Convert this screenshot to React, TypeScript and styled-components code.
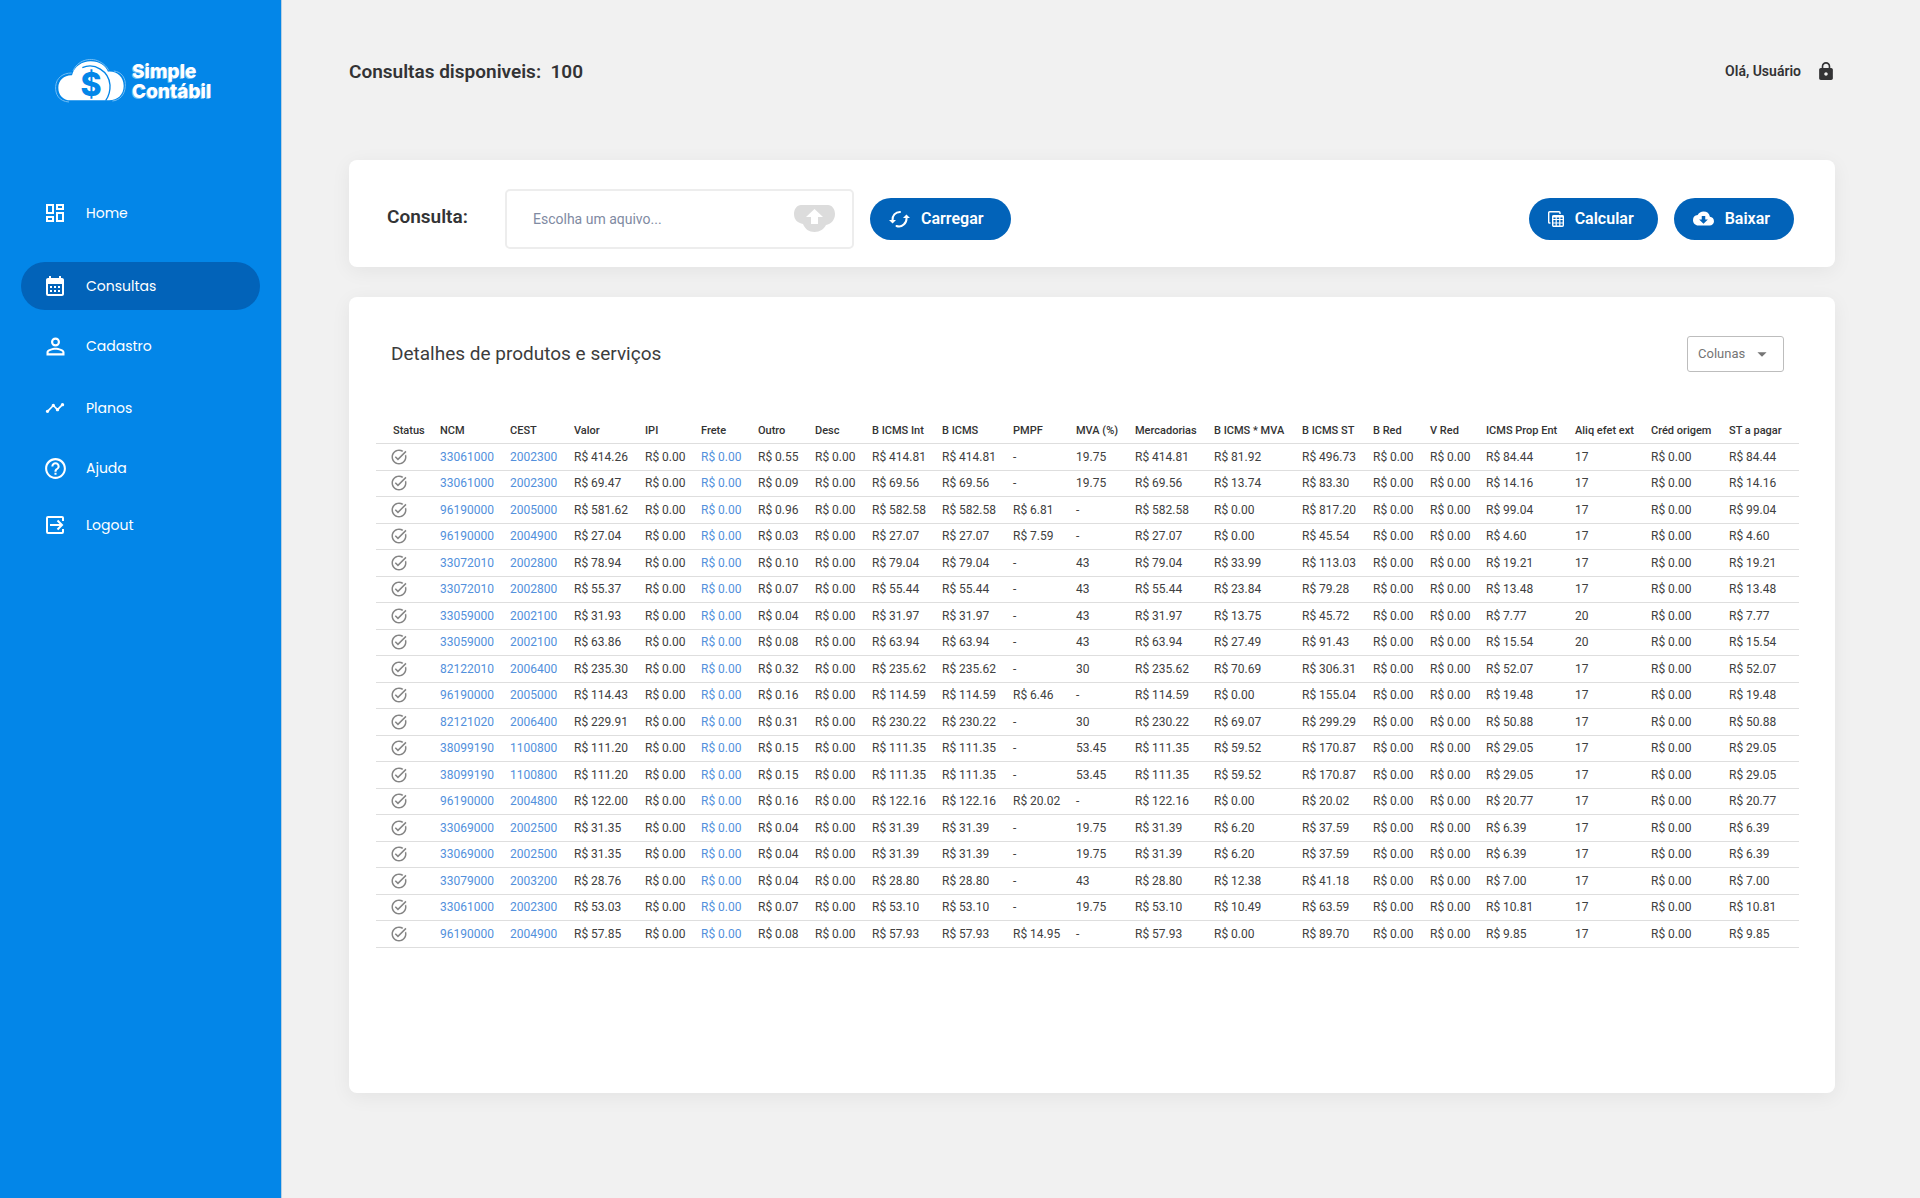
import React from "react";
import styled, { createGlobalStyle } from "styled-components";
import {
  MdOutlineDashboard,
  MdCalendarMonth,
  MdPersonOutline,
  MdTimeline,
  MdHelpOutline,
  MdCloudDownload,
  MdOutlineTaskAlt,
  MdArrowDropDown,
} from "react-icons/md";

const GlobalStyle = createGlobalStyle`
  *, *::before, *::after { box-sizing: border-box; }
  body {
    margin: 0;
    background: #f1f1f1;
    color: #333335;
    font-family: Roboto, "Liberation Sans", sans-serif;
  }
  button, input, select { font-family: inherit; }
`;

const Page = styled.div`
  display: flex;
  min-height: 100vh;
`;

const Sidebar = styled.aside`
  flex: none;
  width: 282px;
  padding: 57px 21px;
  background: #0386e8;
  border-right: 1px solid #b9cfe0;
`;

const Logo = styled.a`
  display: flex;
  align-items: flex-start;
  gap: 4px;
  height: 132px;
  padding-left: 32px;
  color: #fff;
  text-decoration: none;
`;

const LogoName = styled.span`
  display: flex;
  flex-direction: column;
  padding-top: 5px;
  font: 800 19px/20px Inter, "Open Sans", sans-serif;
  text-shadow: -1px 1px 0 #6fbcf5;
`;

const Nav = styled.nav`
  display: flex;
  flex-direction: column;
`;

const NavLink = styled.a<{ $active?: boolean; $after: number }>`
  display: flex;
  align-items: center;
  gap: 17px;
  height: 48px;
  margin-bottom: ${(p) => p.$after}px;
  padding-left: 20px;
  border-radius: 24px;
  background: ${(p) => (p.$active ? "#0263b9" : "transparent")};
  color: #fff;
  font: 400 14px/24px Poppins, Inter, "Open Sans", sans-serif;
  text-decoration: none;
`;

const NavIcon = styled.span`
  display: flex;
  justify-content: center;
  width: 28px;
`;

const Main = styled.main`
  display: flex;
  flex: 1;
  flex-direction: column;
  min-width: 0;
  padding: 56px 85px 105px 67px;
`;

const TopBar = styled.header`
  display: flex;
  align-items: center;
  justify-content: space-between;
  height: 32px;
  margin-bottom: 72px;
`;

const Quota = styled.h1`
  margin: 0;
  font-size: 19px;
  font-weight: 600;
  line-height: 32px;
  white-space: pre;
`;

const User = styled.div`
  display: flex;
  align-items: center;
  gap: 18px;
  padding: 0 2px 2px 0;
  font-size: 14px;
  font-weight: 600;
`;

const IconButton = styled.button`
  display: flex;
  padding: 0;
  border: 0;
  background: none;
  color: inherit;
  cursor: pointer;
`;

const Card = styled.section`
  border-radius: 8px;
  background: #fff;
  box-shadow: 0 4px 20px rgba(0, 0, 0, 0.06);
`;

const QueryCard = styled(Card)`
  display: flex;
  align-items: center;
  height: 107px;
  margin-bottom: 30px;
  padding: 10px 41px 0 38px;
`;

const QueryLabel = styled.label`
  width: 118px;
  margin-top: -4px;
  font-size: 19px;
  font-weight: 600;
`;

const Field = styled.div`
  display: flex;
  align-items: center;
  width: 349px;
  height: 60px;
  margin-right: 16px;
  padding: 0 17px 0 26px;
  border: 2px solid #ededed;
  border-radius: 5px;
`;

const FieldInput = styled.input`
  flex: 1;
  min-width: 0;
  padding: 0;
  border: 0;
  outline: 0;
  font-size: 14px;
  &::placeholder {
    color: #808aa2;
    opacity: 1;
  }
`;

const PillButton = styled.button<{ $wide?: boolean }>`
  display: flex;
  align-items: center;
  gap: 11px;
  height: 42px;
  padding: 0 ${(p) => (p.$wide ? 28 : 24)}px 0 19px;
  border: 0;
  border-radius: 21px;
  background: #0263b9;
  color: #fff;
  font-size: 16px;
  font-weight: 600;
  cursor: pointer;
`;

const Actions = styled.div`
  display: flex;
  gap: 16px;
  margin-left: auto;
`;

const DetailsCard = styled(Card)`
  flex: 1;
  padding: 39px 36px 24px 27px;
`;

const DetailsHead = styled.div`
  display: flex;
  align-items: center;
  justify-content: space-between;
  margin-bottom: 44px;
  padding: 0 15px;
`;

const DetailsTitle = styled.h2`
  margin: 0;
  color: #3c3c3c;
  font-size: 19px;
  font-weight: 400;
  line-height: 36px;
`;

const SelectBox = styled.div`
  display: grid;
  grid-template: 36px / 97px;
  align-items: center;
  color: #757575;
  > * {
    grid-area: 1 / 1;
  }
  svg {
    justify-self: end;
    margin-right: 11px;
    pointer-events: none;
  }
`;

const Select = styled.select`
  width: 100%;
  height: 36px;
  padding: 0 28px 2px 10px;
  border: 1px solid #bdbdbd;
  border-radius: 3px;
  appearance: none;
  background: #fff;
  color: #757575;
  font-size: 13px;
`;

const Table = styled.table`
  width: 100%;
  border-collapse: collapse;
  table-layout: fixed;
  color: #404040;
  font-size: 12px;
  line-height: 16px;
  text-align: left;
  white-space: nowrap;
`;

const Row = styled.tr`
  height: 27px;
  border-bottom: 1px solid #dedede;
  tbody &:nth-child(even) {
    height: 26px;
  }
`;

const Th = styled.th`
  padding: 4px 0 0;
  font-size: 11px;
  font-weight: 500;
  color: #333;
  &:first-child {
    padding-left: 17px;
  }
`;

const Td = styled.td<{ $link?: boolean }>`
  padding: 0;
  color: ${(p) => (p.$link ? "#5290dc" : "inherit")};
  &:first-child {
    padding-left: 14px;
    color: #858585;
  }
  svg {
    display: block;
  }
`;

function CloudLogo() {
  return (
    <svg width="75" height="47" viewBox="40 50 225 141" aria-hidden="true">
      <g fill="none" stroke="#6fbcf5" strokeWidth="3">
        <path d="M88 185C58 183 46 162 48 138C50 112 70 98 96 98" />
        <path d="M100 92C112 62 150 48 180 64C194 71 202 80 207 90" />
        <path d="M222 92C246 94 259 114 257 138C255 164 240 180 218 182" />
      </g>
      <path
        fill="#fff"
        d="M93 180C70 180 56 164 56 142C56 120 74 104 97 105C104 78 127 63 153 63C180 63 198 77 205 94C232 92 252 110 252 137C252 163 234 180 208 180Z"
      />
      <path d="M128 82C164 66 208 92 211 134C212 152 207 168 198 181" fill="none" stroke="#0386e8" strokeWidth="4" />
      <text x="154" y="168" textAnchor="middle" fill="#0386e8" fontFamily="Inter, sans-serif" fontWeight="800" fontSize="96">
        $
      </text>
    </svg>
  );
}

function LogoutIcon() {
  return (
    <svg width="18" height="18" viewBox="0 0 18 18" fill="none" stroke="#fff" strokeWidth="2" aria-hidden="true">
      <path d="M17 5V2a1 1 0 0 0-1-1H2a1 1 0 0 0-1 1v14a1 1 0 0 0 1 1h14a1 1 0 0 0 1-1v-3" />
      <path d="M4 9h12M11.500 4.500L16 9l-4.500 4.500" />
    </svg>
  );
}

function LockIcon() {
  return (
    <svg width="14" height="18" viewBox="4 1 16 21" fill="currentColor" aria-hidden="true">
      <path d="M18 8h-1V6c0-2.760-2.240-5-5-5S7 3.240 7 6v2H6c-1.100 0-2 .9-2 2v10c0 1.100.9 2 2 2h12c1.100 0 2-.9 2-2V10c0-1.100-.9-2-2-2zm-6 9c-1.100 0-2-.9-2-2s.9-2 2-2 2 .9 2 2-.9 2-2 2zm3.100-9H8.900V6c0-1.710 1.390-3.100 3.100-3.100s3.100 1.390 3.100 3.100v2z" />
    </svg>
  );
}

function UploadCloud() {
  return (
    <svg width="41" height="27" viewBox="0 0 41 27" aria-hidden="true">
      <path
        fill="#dcdcdc"
        d="M7 0H34C38 0 41 4 41 9C41 15 37 19 32 20C30 24 26 27 20.500 27C15 27 11 24 9 19C4 18 0 15 0 9C0 4 3 0 7 0Z"
      />
      <path fill="#fff" d="M20.500 4L29 12H24V19H17V12H12Z" />
    </svg>
  );
}

function ReloadIcon() {
  return (
    <svg width="21" height="18" viewBox="0 0 21 18" aria-hidden="true">
      <g fill="none" stroke="#fff" strokeWidth="2" strokeLinecap="round">
        <path d="M3.500 10.500C3 5.500 6.500 2 11 2" />
        <path d="M17.500 7.500C18 13 13 18 7.500 16" />
      </g>
      <path fill="#fff" d="M0 10H7L3.600 13.500ZM14 8H21L17.400 4.500Z" />
    </svg>
  );
}

function SheetsIcon() {
  return (
    <svg width="16" height="16" viewBox="0 0 16 16" fill="none" stroke="#fff" aria-hidden="true">
      <path d="M2.500 12H1.500a.8.8 0 0 1-.8-.8V1.700a1 1 0 0 1 1-1H11a1 1 0 0 1 1 1V3" strokeWidth="1.400" />
      <rect x="4.700" y="4.700" width="10.600" height="10.600" rx="1" strokeWidth="1.400" />
      <path d="M4.500 5.500H15.500" strokeWidth="2" />
      <path d="M5 8.500H15M5 12H15M8.200 6V15M11.800 6V15" strokeWidth="1.200" />
    </svg>
  );
}

const navItems = [
  { label: "Home", icon: <MdOutlineDashboard size={24} />, after: 25 },
  { label: "Consultas", icon: <MdCalendarMonth size={24} />, after: 12, active: true },
  { label: "Cadastro", icon: <MdPersonOutline size={27} />, after: 14 },
  { label: "Planos", icon: <MdTimeline size={20} />, after: 12 },
  { label: "Ajuda", icon: <MdHelpOutline size={25} />, after: 9 },
  { label: "Logout", icon: <LogoutIcon />, after: 0 },
];

const columns: [string, number][] = [
  ["Status", 64],
  ["NCM", 70],
  ["CEST", 64],
  ["Valor", 71],
  ["IPI", 56],
  ["Frete", 57],
  ["Outro", 57],
  ["Desc", 57],
  ["B ICMS Int", 70],
  ["B ICMS", 71],
  ["PMPF", 63],
  ["MVA (%)", 59],
  ["Mercadorias", 79],
  ["B ICMS * MVA", 88],
  ["B ICMS ST", 71],
  ["B Red", 57],
  ["V Red", 56],
  ["ICMS Prop Ent", 89],
  ["Aliq efet ext", 76],
  ["Créd origem", 78],
  ["ST a pagar", 70],
];

// ncm, cest, valor, outro, base, pmpf, mva, base * mva, base st, icms próprio, alíquota
const items = `
33061000 2002300 414.26 0.55 414.81 - 19.75 81.92 496.73 84.44 17
33061000 2002300 69.47 0.09 69.56 - 19.75 13.74 83.30 14.16 17
96190000 2005000 581.62 0.96 582.58 6.81 - 0.00 817.20 99.04 17
96190000 2004900 27.04 0.03 27.07 7.59 - 0.00 45.54 4.60 17
33072010 2002800 78.94 0.10 79.04 - 43 33.99 113.03 19.21 17
33072010 2002800 55.37 0.07 55.44 - 43 23.84 79.28 13.48 17
33059000 2002100 31.93 0.04 31.97 - 43 13.75 45.72 7.77 20
33059000 2002100 63.86 0.08 63.94 - 43 27.49 91.43 15.54 20
82122010 2006400 235.30 0.32 235.62 - 30 70.69 306.31 52.07 17
96190000 2005000 114.43 0.16 114.59 6.46 - 0.00 155.04 19.48 17
82121020 2006400 229.91 0.31 230.22 - 30 69.07 299.29 50.88 17
38099190 1100800 111.20 0.15 111.35 - 53.45 59.52 170.87 29.05 17
38099190 1100800 111.20 0.15 111.35 - 53.45 59.52 170.87 29.05 17
96190000 2004800 122.00 0.16 122.16 20.02 - 0.00 20.02 20.77 17
33069000 2002500 31.35 0.04 31.39 - 19.75 6.20 37.59 6.39 17
33069000 2002500 31.35 0.04 31.39 - 19.75 6.20 37.59 6.39 17
33079000 2003200 28.76 0.04 28.80 - 43 12.38 41.18 7.00 17
33061000 2002300 53.03 0.07 53.10 - 19.75 10.49 63.59 10.81 17
96190000 2004900 57.85 0.08 57.93 14.95 - 0.00 89.70 9.85 17
`
  .trim()
  .split("\n")
  .map((line) => line.split(" "));

const money = (value: string) => (value === "-" ? value : `R$ ${value}`);

function toCells(item: string[]) {
  const [ncm, cest, valor, outro, base, pmpf, mva, baseMva, baseSt, icms, aliq] = item;
  const zero = money("0.00");
  return [
    ncm,
    cest,
    money(valor),
    zero,
    zero,
    money(outro),
    zero,
    money(base),
    money(base),
    money(pmpf),
    mva,
    money(base),
    money(baseMva),
    money(baseSt),
    zero,
    zero,
    money(icms),
    aliq,
    zero,
    money(icms),
  ];
}

const linkCells = [0, 1, 4];

export default function App() {
  return (
    <Page>
      <GlobalStyle />
      <Sidebar>
        <Logo href="#">
          <CloudLogo />
          <LogoName>
            <span>Simple</span>
            <span>Contábil</span>
          </LogoName>
        </Logo>
        <Nav>
          {navItems.map((item) => (
            <NavLink key={item.label} href="#" $active={item.active} $after={item.after}>
              <NavIcon>{item.icon}</NavIcon>
              {item.label}
            </NavLink>
          ))}
        </Nav>
      </Sidebar>
      <Main>
        <TopBar>
          <Quota>{"Consultas disponiveis:  100"}</Quota>
          <User>
            Olá, Usuário
            <IconButton type="button" aria-label="Bloquear">
              <LockIcon />
            </IconButton>
          </User>
        </TopBar>
        <QueryCard>
          <QueryLabel htmlFor="arquivo">Consulta:</QueryLabel>
          <Field>
            <FieldInput id="arquivo" type="text" placeholder="Escolha um aquivo..." />
            <IconButton type="button" aria-label="Enviar arquivo">
              <UploadCloud />
            </IconButton>
          </Field>
          <PillButton type="button" $wide>
            <ReloadIcon />
            Carregar
          </PillButton>
          <Actions>
            <PillButton type="button">
              <SheetsIcon />
              Calcular
            </PillButton>
            <PillButton type="button">
              <MdCloudDownload size={21} />
              Baixar
            </PillButton>
          </Actions>
        </QueryCard>
        <DetailsCard>
          <DetailsHead>
            <DetailsTitle>Detalhes de produtos e serviços</DetailsTitle>
            <SelectBox>
              <Select aria-label="Colunas" defaultValue="colunas">
                <option value="colunas">Colunas</option>
              </Select>
              <MdArrowDropDown size={22} />
            </SelectBox>
          </DetailsHead>
          <Table>
            <colgroup>
              {columns.map(([name, width]) => (
                <col key={name} style={{ width }} />
              ))}
            </colgroup>
            <thead>
              <Row>
                {columns.map(([name]) => (
                  <Th key={name} scope="col">
                    {name}
                  </Th>
                ))}
              </Row>
            </thead>
            <tbody>
              {items.map((item, i) => (
                <Row key={i}>
                  <Td>
                    <MdOutlineTaskAlt size={18} />
                  </Td>
                  {toCells(item).map((text, j) => (
                    <Td key={j} $link={linkCells.includes(j)}>
                      {text}
                    </Td>
                  ))}
                </Row>
              ))}
            </tbody>
          </Table>
        </DetailsCard>
      </Main>
    </Page>
  );
}
